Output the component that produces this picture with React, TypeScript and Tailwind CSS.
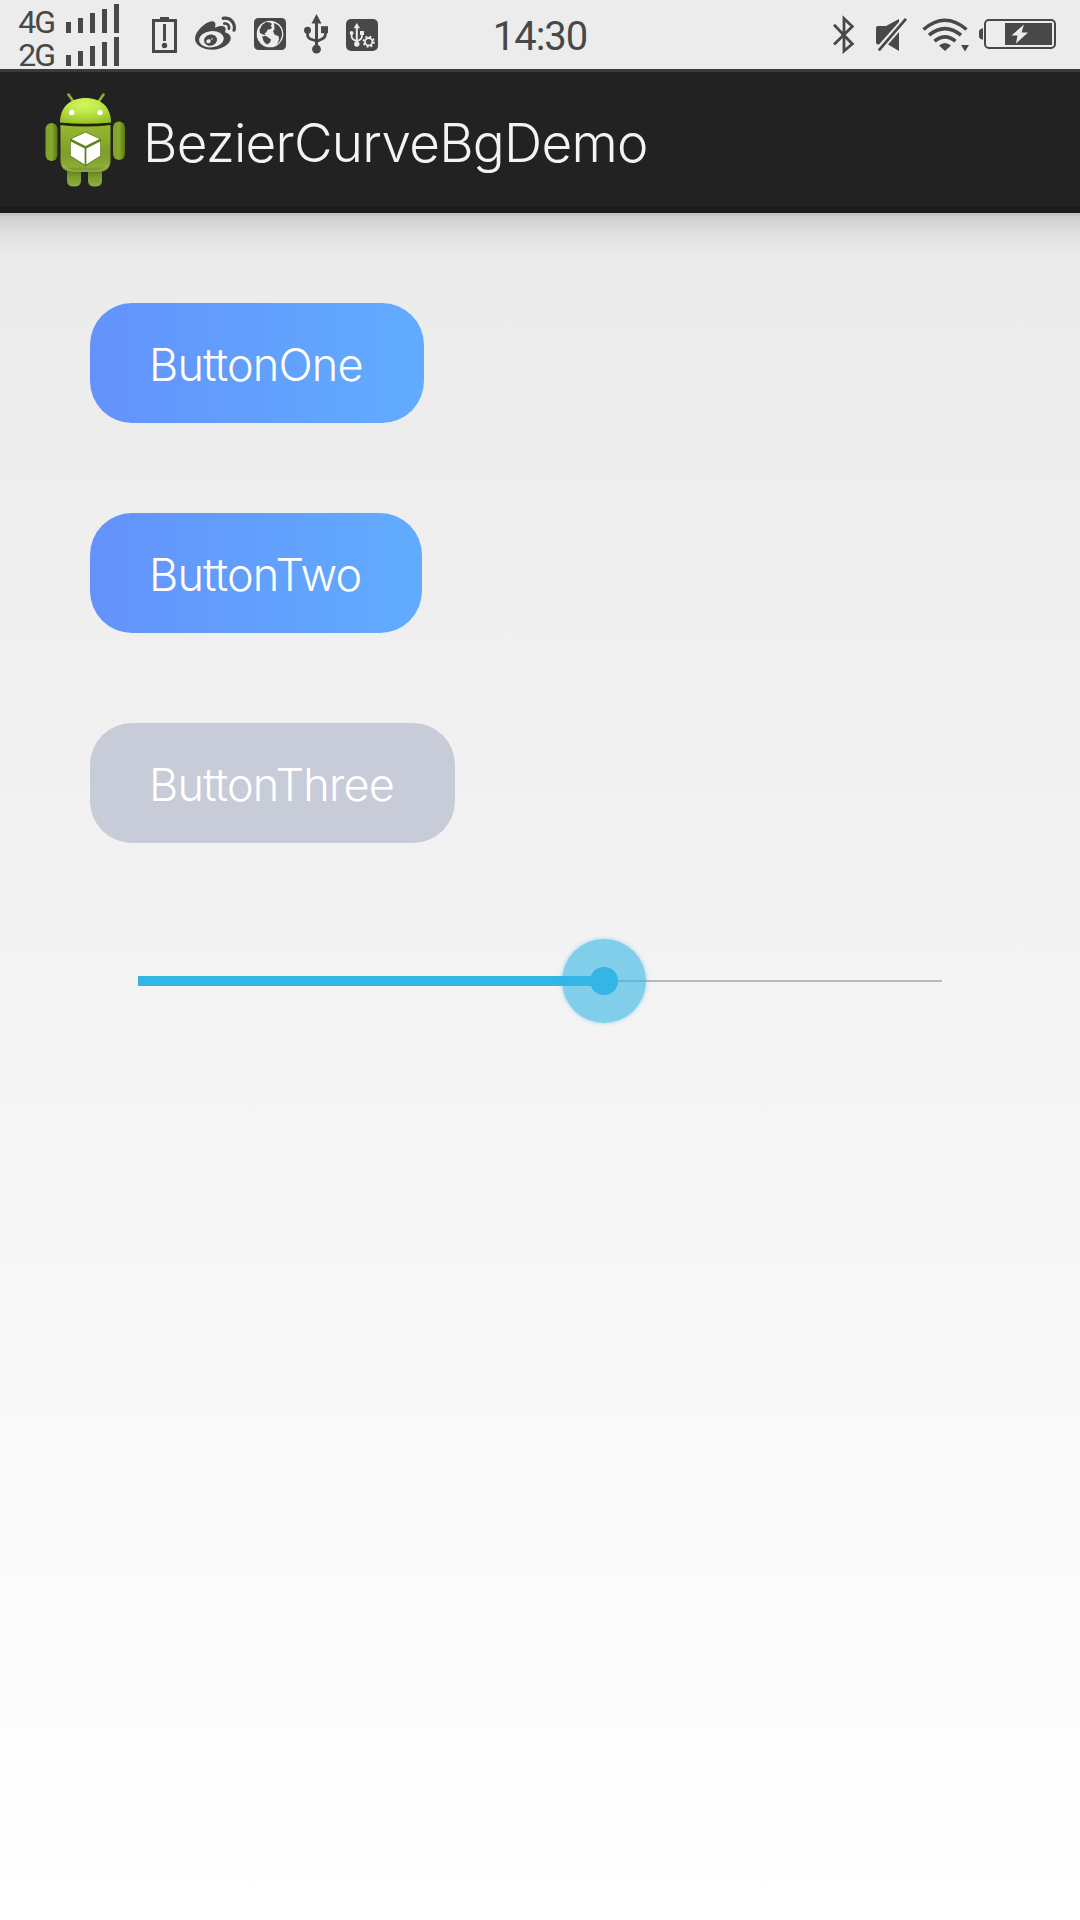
import { FaWeibo } from "react-icons/fa";

const ink = "#484848";

function SignalBars() {
  return (
    <div className="flex h-[29px] items-end gap-[7px]">
      <span className="h-[11px] w-[5px] bg-[#484848]" />
      <span className="h-[15px] w-[5px] bg-[#484848]" />
      <span className="h-5 w-[5px] bg-[#484848]" />
      <span className="h-6 w-[5px] bg-[#484848]" />
      <span className="h-[29px] w-[5px] bg-[#484848]" />
    </div>
  );
}

function SimRow({ label }: { label: string }) {
  return (
    <div className="flex h-[33px] items-end">
      <span className="w-[46px] text-right text-[32px] leading-[22px] tracking-[-2px]">{label}</span>
      <div className="ml-3">
        <SignalBars />
      </div>
    </div>
  );
}

function BatteryAlert() {
  return (
    <svg width="25" height="36" viewBox="0 0 25 36" className="ml-[33px] shrink-0">
      <path d="M8 0h9v3H8z" fill={ink} />
      <path d="M1.5 3.5h22v31h-22z" fill="none" stroke={ink} strokeWidth="3" />
      <path d="M11 7h3v17h-3z" fill={ink} />
      <circle cx="12.5" cy="28.5" r="2.7" fill={ink} />
    </svg>
  );
}

function Globe() {
  return (
    <svg width="32" height="32" viewBox="0 0 32 32" className="ml-[18px] -mt-[1px] shrink-0">
      <rect width="32" height="32" rx="4.5" fill={ink} />
      <circle cx="16" cy="16" r="13.3" fill="#ececec" />
      <path d="M5.5 12 8 7l4-3 4 .5 2 1.5-1.5 2L18 9l-1 2-3 .5-2 3-1.5 1 1 2-2.5-1-3-1.5z" fill={ink} />
      <path d="M20 5c6 2 8.5 7 8 12-.5 4-2.5 7-5 9.5l2-5-.5-3.5-3.5-1-2-3.5 1.5-2.5z" fill={ink} />
      <path d="M8 18.5l4-.5 5 3.5-1 3-3 2-3-2.500z" fill={ink} />
    </svg>
  );
}

function UsbMark() {
  return (
    <g fill={ink} stroke={ink}>
      <path d="M12.5 8v26" strokeWidth="3" fill="none" />
      <path d="M3.5 16v4.5q0 3.5 3.5 4.7l5.5 1.8M21.5 16v4q0 3.5-3.5 5l-5.5 2.5" strokeWidth="2.7" fill="none" />
      <path d="M12.5 0l5 9.5h-10z" stroke="none" />
      <circle cx="3.5" cy="16.2" r="3.5" stroke="none" />
      <path d="M17 12.2h7v7h-7z" stroke="none" />
      <circle cx="12.5" cy="35.2" r="4.4" stroke="none" />
    </g>
  );
}

function UsbSettings() {
  return (
    <svg width="32" height="32" viewBox="0 0 32 32" className="mt-px ml-[17px] shrink-0">
      <rect width="32" height="32" rx="5" fill={ink} />
      <g stroke="#ececec" fill="#ececec">
        <path d="M10.8 8v18" strokeWidth="2" />
        <path d="M5.6 14v3q0 4 5.2 4.8q5.2-.8 5.2-5v-3" strokeWidth="1.7" fill="none" />
        <path d="M10.8 4l3.2 5.2H7.6z" stroke="none" />
        <circle cx="5.6" cy="14" r="1.9" stroke="none" />
        <path d="M14 12h4v4h-4z" stroke="none" />
        <circle cx="10.8" cy="25" r="2.7" stroke="none" />
        <circle cx="22.7" cy="22.7" r="3.7" strokeWidth="1.8" fill="none" />
        <circle cx="22.7" cy="22.7" r="5.2" strokeWidth="1.8" fill="none" strokeDasharray="2 2.084" />
      </g>
    </svg>
  );
}

function Bluetooth() {
  return (
    <svg width="22" height="40" viewBox="0 0 22 40" className="mr-px shrink-0">
      <path d="M1 9.7 19.3 29 11 36V3.5l8.3 8L1 29.5" fill="none" stroke={ink} strokeWidth="2.8" />
    </svg>
  );
}

function Muted() {
  return (
    <svg width="32" height="34" viewBox="0 0 32 34" className="ml-[20px] shrink-0">
      <path d="M2 8h8L23 1v3L3 26.5H2a2 2 0 0 1-2-2V10a2 2 0 0 1 2-2z" fill={ink} />
      <path d="M23 14v19L12 26.5z" fill={ink} />
      <path d="M2.8 32.3 30 .8" stroke={ink} strokeWidth="2.7" />
    </svg>
  );
}

function Wifi() {
  return (
    <svg width="47" height="34" viewBox="0 0 47 34" className="ml-[14px] shrink-0">
      <g fill="none" stroke={ink} strokeWidth="3.6">
        <path d="M1.5 11.5Q23-7 44.5 11.5" />
        <path d="M7 17.2Q23 4 39 17.2" />
        <path d="M12.5 23.2Q23 14.5 33.5 23.2" />
      </g>
      <path d="M17 27.5q6-5 12 0l-6 5.5z" fill={ink} />
      <path d="M39 27h8l-4 6.5z" fill={ink} />
    </svg>
  );
}

function Battery() {
  return (
    <svg width="77" height="30" viewBox="0 0 77 30" className="-mt-[1px] ml-[10px] shrink-0">
      <path d="M4 9.3v11.4q-4-.8-4-3.2v-5q0-2.4 4-3.2z" fill={ink} />
      <rect x="6" y="1" width="70" height="28" rx="4" fill="none" stroke={ink} strokeWidth="2" />
      <path d="M26 4h47v22H26z" fill={ink} />
      <path d="M45 5.5 32.5 16.5h6L37 24.5 49 13.5h-6.5z" fill="#ececec" />
    </svg>
  );
}

function AndroidIcon() {
  return (
    <svg width="80" height="96" viewBox="0 0 80 96" className="mt-[3px] ml-[45px] shrink-0">
      <defs>
        <radialGradient id="head" cx=".48" cy=".25" r=".75">
          <stop offset="0" stopColor="#d2f65c" />
          <stop offset=".4" stopColor="#c0ea48" />
          <stop offset="1" stopColor="#98c22c" />
        </radialGradient>
        <linearGradient id="body" x1="0" y1="0" x2="0" y2="1">
          <stop offset="0" stopColor="#97b832" />
          <stop offset=".6" stopColor="#7d9e28" />
          <stop offset=".88" stopColor="#8cab38" />
          <stop offset="1" stopColor="#6b8b22" />
        </linearGradient>
        <linearGradient id="limb" x1="0" y1="0" x2="1" y2="0">
          <stop offset="0" stopColor="#7fa028" />
          <stop offset=".5" stopColor="#88a92c" />
          <stop offset="1" stopColor="#587718" />
        </linearGradient>
        <linearGradient id="leg" x1="0" y1="0" x2="0" y2="1">
          <stop offset="0" stopColor="#4c6b12" />
          <stop offset=".5" stopColor="#7c9d2a" />
          <stop offset="1" stopColor="#8fae45" />
        </linearGradient>
      </defs>
      <path d="M23.5 1.5 28 8M58.5 1.5 54 8" stroke="#8fb033" strokeWidth="2.6" strokeLinecap="round" />
      <path d="M22 74h14v14q0 5.5-7 5.5t-7-5.500zM43 74h14v14q0 5.5-7 5.5t-7-5.500z" fill="url(#leg)" />
      <rect x=".5" y="30" width="12" height="38" rx="6" fill="url(#limb)" />
      <rect x="68" y="28.5" width="12" height="38.500" rx="6" fill="url(#limb)" />
      <path d="M15.5 32v35q0 12 12 12h26q12 0 12-12V32q-25 3-50 0z" fill="url(#body)" />
      <path d="M18 72q4 6 12 6h21q8 0 12-6" fill="none" stroke="#9fba62" strokeOpacity=".7" strokeWidth="1.4" />
      <path d="M15 29.500C15 14 25 5 40.5 5S66 14 66 29.500Q40.5 32 15 29.500z" fill="url(#head)" />
      <path d="M15.5 30.800Q40.5 33.500 65.5 30.800" fill="none" stroke="#1d2908" strokeWidth="1.8" />
      <circle cx="26.8" cy="19.5" r="2.7" fill="#fff" />
      <circle cx="55" cy="19.5" r="2.7" fill="#fff" />
      <path d="M40.500 38.500 56 46v17L40.500 73.500 25 63V46z" fill="#55741a" opacity=".7" />
      <path d="M40.500 39.500 54.500 46 40.500 53 26.500 46z" fill="#fff" />
      <path d="M25.8 48.5 39.600 55.5v16l-13.8-8.800zM55.2 48.5 41.400 55.5v16l13.8-8.800z" fill="#fff" />
    </svg>
  );
}

function StatusBar() {
  return (
    <header className="grid h-[69px] grid-cols-[1fr_auto_1fr] items-center bg-[#ececec] font-['Roboto',sans-serif] text-[#484848]">
      <div className="flex items-center">
        <div className="ml-2 flex h-[69px] flex-col">
          <SimRow label="4G" />
          <SimRow label="2G" />
        </div>
        <BatteryAlert />
        <FaWeibo size={41} color={ink} className="ml-[18px] shrink-0" />
        <Globe />
        <svg width="25" height="40" viewBox="0 0 25 40" className="-mt-[1px] ml-[18px] shrink-0">
          <UsbMark />
        </svg>
        <UsbSettings />
      </div>
      <time className="pt-1 text-[40px] leading-none tracking-[-1px]">14:30</time>
      <div className="flex items-center justify-end pr-6">
        <Bluetooth />
        <Muted />
        <Wifi />
        <Battery />
      </div>
    </header>
  );
}

function TitleBar() {
  return (
    <div className="flex h-36 items-center border-t-[3px] border-b-[6px] border-t-[#3a3a3a] border-b-[#1b1b1b] bg-[#222222]">
      <AndroidIcon />
      <h1 className="ml-[18px] pt-[7px] text-[53px] leading-none font-light tracking-[-0.72px] text-[#f3f3f3]">
        BezierCurveBgDemo
      </h1>
    </div>
  );
}

const buttons = [
  { label: "ButtonOne", style: "w-[334px] bg-linear-to-r from-[#6392fb] to-[#61acff]" },
  { label: "ButtonTwo", style: "w-[332px] bg-linear-to-r from-[#6392fb] to-[#61acff]" },
  { label: "ButtonThree", style: "w-[365px] bg-[#c8ccd9]" },
];

function Slider() {
  return (
    <div className="relative mt-[92px] ml-12 flex h-[92px] w-[804px] items-center">
      <div className="h-[10px] w-[466px] bg-[#33b5e5]" />
      <div className="h-[2px] flex-1 bg-[#b9b9b9]" />
      <div className="absolute left-[424px] flex size-[84px] items-center justify-center rounded-full bg-[#33b5e5]/60 shadow-[0_0_4px_#33b5e580]">
        <span className="size-7 rounded-full bg-[#33b5e5]" />
      </div>
    </div>
  );
}

export default function App() {
  return (
    <div className="flex h-[1920px] w-[1080px] flex-col overflow-hidden bg-linear-to-b from-[#e8e8e8] to-white font-['Inter',sans-serif]">
      <StatusBar />
      <TitleBar />
      <div className="h-[42px] border-t-[3px] border-[#c4c4c4] bg-linear-to-b from-black/12 via-black/4 to-transparent" />
      <main className="flex flex-col items-start px-[90px] pt-12">
        <div className="flex flex-col gap-[90px]">
          {buttons.map((b) => (
            <button
              key={b.label}
              className={`${b.style} flex h-[120px] items-center rounded-[42px] pt-[2px] pl-[59px] text-[45px] leading-none font-light tracking-[-0.8px] whitespace-nowrap text-white`}
            >
              {b.label}
            </button>
          ))}
        </div>
        <Slider />
      </main>
    </div>
  );
}
